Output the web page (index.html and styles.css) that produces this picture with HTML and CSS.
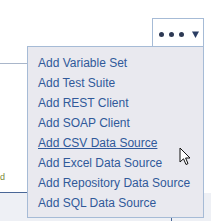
FILE: index.html
```html
<!DOCTYPE html>
<html>
<head>
<meta charset="utf-8">
<link rel="stylesheet" href="styles.css">
</head>
<body>
<div class="page">
  <div class="toolbar">
    <div class="more-btn">
      <span class="dots"><i></i><i></i><i></i></span>
      <svg class="caret" width="7" height="7" viewBox="0 0 7 7"><polygon points="0,0.5 7,0.5 3.5,7" fill="#2b3d63"/></svg>
    </div>
  </div>
  <div class="content">
    <div class="rule-top"></div>
    <div class="side-text">d</div>
    <div class="rule-bottom"></div>
    <div class="panel"><div class="panel-box"></div></div>
  </div>
  <ul class="menu">
    <li>Add Variable Set</li>
    <li>Add Test Suite</li>
    <li>Add REST Client</li>
    <li>Add SOAP Client</li>
    <li class="hover">Add CSV Data Source</li>
    <li>Add Excel Data Source</li>
    <li>Add Repository Data Source</li>
    <li>Add SQL Data Source</li>
  </ul>
  <svg class="cursor" width="13" height="20" viewBox="0 0 13 20">
    <path d="M1 1 L1 15 L4.5 11.8 L7 17.5 L9 16.6 L6.6 11 L11 11 Z" fill="#fff" stroke="#111" stroke-width="1" stroke-linejoin="miter"/>
  </svg>
</div>
</body>
</html>
```
FILE: styles.css
```css
* { box-sizing: border-box; }
html, body { margin: 0; padding: 0; background: #fff; }
body { font-family: "Liberation Sans", Arial, sans-serif; }
.page { position: relative; width: 211px; height: 221px; overflow: hidden; }
.toolbar { display: flex; justify-content: flex-end; padding: 18px 7px 0 0; height: 47px; }
.more-btn {
  width: 52px; height: 29px;
  border: 1px solid #a6bbd6; border-bottom: none;
  display: flex; align-items: center; padding: 2px 0 0 6px; gap: 8px;
  background: #fff;
}
.dots { display: flex; gap: 5px; }
.dots i { display: block; width: 5px; height: 5px; border-radius: 50%; background: #2d3954; }
.caret { display: block; }
.content { position: relative; height: 174px; }
.rule-top { margin-top: 16px; width: 30px; height: 1px; background: #a9b6ca; }
.side-text { margin-top: 107px; font-size: 9px; line-height: 12px; color: #7a8a3a; }
.rule-bottom { margin-top: 9px; width: 30px; height: 1px; background: #4a6797; }
.panel { height: 30px; background: #eef0f5; position: relative; }
.panel-box { position: absolute; left: 159px; top: -1px; width: 13px; height: 30px; border-right: 1px solid #4a6797; border-top: 1px solid #d6dbe6; }
.menu {
  position: absolute; left: 27px; top: 46px; width: 177px; height: 172px;
  margin: 0; padding: 6px 0 0 10px; list-style: none;
  background: #e9e9ef; border: 1px solid #a6bbd6;
}
.menu li { font-size: 12px; line-height: 20px; color: #30599a; white-space: nowrap; }
.menu li.hover { text-decoration: underline; }
.cursor { position: absolute; left: 179px; top: 147px; }
```
